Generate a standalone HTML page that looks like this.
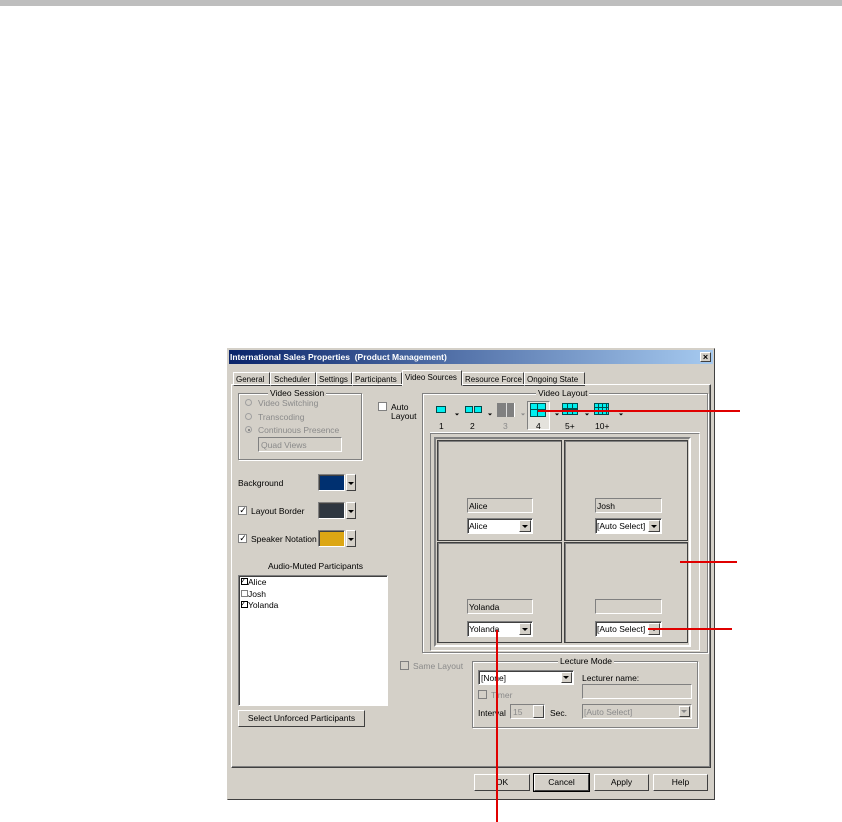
<!DOCTYPE html>
<html><head><meta charset="utf-8"><style>
body{margin:0;width:842px;height:822px;background:#fff;position:relative;overflow:hidden;font-family:"Liberation Sans",sans-serif;font-size:8.5px;color:#000}
div,span{position:absolute;box-sizing:border-box}
.t{white-space:nowrap;line-height:10px}
.g{color:#8a8a8a}
.dlg{background:#d4d0c8;border:1px solid #404040;border-top-color:#d4d0c8;border-left-color:#d4d0c8}
.raise{background:#d4d0c8;border:1px solid;border-color:#fff #404040 #404040 #fff}
.sunk{background:#fff;border:1px solid;border-color:#808080 #fff #fff #808080;box-shadow:inset 1px 1px 0 #404040}
.sunkg{background:#d4d0c8;border:1px solid;border-color:#808080 #fff #fff #808080}
.grp{border:1px solid #808080;box-shadow:1px 1px 0 #fff, inset 1px 1px 0 #fff}
.lbl{background:#d4d0c8;padding:0 2px}
.arr{width:0;height:0;border-left:3px solid transparent;border-right:3px solid transparent;border-top:3px solid #000}
.cb{width:9px;height:9px;background:#fff;border:1px solid #808080}
.btn{background:#d4d0c8;border:1px solid;border-color:#fff #404040 #404040 #fff;text-align:center;line-height:14px}
.cy{background:#00f0f0;border:1px solid #004848}
.red{background:#e00000}
.tab{font-size:8px}
</style></head><body>
<div style="left:0;top:0;width:842px;height:6px;background:#bebebe"></div>

<div class="dlg" style="left:227px;top:348px;width:488px;height:452px"></div>
<div style="left:229px;top:350px;width:484px;height:14px;background:linear-gradient(90deg,#0a246a,#a6caf0)"></div>
<div class="t" style="left:230px;top:352px;color:#fff;font-weight:bold;font-size:8.5px">International Sales Properties&nbsp; (Product Management)</div>
<div class="raise" style="left:700px;top:352px;width:11px;height:10px;font-size:9px;line-height:8px;text-align:center;font-weight:bold">×</div>

<!-- tabs -->
<div class="raise" style="left:233px;top:372px;width:37px;height:14px"></div><div class="t tab" style="left:236px;top:375px">General</div>
<div class="raise" style="left:270px;top:372px;width:46px;height:14px"></div><div class="t tab" style="left:274px;top:375px">Scheduler</div>
<div class="raise" style="left:316px;top:372px;width:36px;height:14px"></div><div class="t tab" style="left:319px;top:375px">Settings</div>
<div class="raise" style="left:352px;top:372px;width:50px;height:14px"></div><div class="t tab" style="left:355px;top:375px">Participants</div>
<div class="raise" style="left:462px;top:372px;width:62px;height:14px"></div><div class="t tab" style="left:465px;top:375px">Resource Force</div>
<div class="raise" style="left:524px;top:372px;width:61px;height:14px"></div><div class="t tab" style="left:527px;top:375px">Ongoing State</div>
<div style="left:231px;top:384px;width:480px;height:384px;border:1px solid;border-color:#fff #404040 #404040 #fff;box-shadow:inset -1px -1px 0 #808080"></div>
<div style="left:402px;top:370px;width:60px;height:16px;background:#d4d0c8;border:1px solid;border-color:#fff #404040 transparent #fff"></div><div class="t tab" style="left:405px;top:373px">Video Sources</div>

<!-- Video session -->
<div class="grp" style="left:238px;top:393px;width:124px;height:67px"></div>
<div class="t lbl" style="left:268px;top:388px">Video Session</div>
<div style="left:245px;top:399px;width:7px;height:7px;border:1px solid #a0a0a0;border-radius:50%;background:#d4d0c8"></div><div class="t g" style="left:258px;top:398px">Video Switching</div>
<div style="left:245px;top:413px;width:7px;height:7px;border:1px solid #a0a0a0;border-radius:50%"></div><div class="t g" style="left:258px;top:412px">Transcoding</div>
<div style="left:245px;top:426px;width:7px;height:7px;border:1px solid #a0a0a0;border-radius:50%"></div><div style="left:248px;top:429px;width:2px;height:2px;background:#888"></div><div class="t g" style="left:258px;top:425px">Continuous Presence</div>
<div class="sunkg" style="left:258px;top:437px;width:84px;height:15px"></div><div class="t g" style="left:261px;top:440px">Quad Views</div>

<!-- colors -->
<div class="t" style="left:238px;top:478px">Background</div>
<div class="sunk" style="left:318px;top:474px;width:27px;height:17px;background:#003070"></div>
<div class="raise" style="left:346px;top:474px;width:10px;height:17px"></div><div class="arr" style="left:348px;top:482px"></div>
<div class="cb" style="left:238px;top:506px"></div><div class="t" style="left:238px;top:505px;font-size:9px;width:10px;text-align:center">✓</div><div class="t" style="left:251px;top:506px">Layout Border</div>
<div class="sunk" style="left:318px;top:502px;width:27px;height:17px;background:#2e3640"></div>
<div class="raise" style="left:346px;top:502px;width:10px;height:17px"></div><div class="arr" style="left:348px;top:510px"></div>
<div class="cb" style="left:238px;top:534px"></div><div class="t" style="left:238px;top:533px;font-size:9px;width:10px;text-align:center">✓</div><div class="t" style="left:251px;top:534px">Speaker Notation</div>
<div class="sunk" style="left:318px;top:530px;width:27px;height:17px;background:#dca614"></div>
<div class="raise" style="left:346px;top:530px;width:10px;height:17px"></div><div class="arr" style="left:348px;top:538px"></div>

<div class="t" style="left:268px;top:561px">Audio-Muted Participants</div>
<div class="sunk" style="left:238px;top:575px;width:150px;height:131px"></div>
<div class="cb" style="left:241px;top:578px;width:7px;height:7px;border-color:#000"></div><div class="t" style="left:240px;top:576px;font-size:8px">✓</div><div class="t" style="left:248px;top:577px">Alice</div>
<div class="cb" style="left:241px;top:590px;width:7px;height:7px"></div><div class="t" style="left:248px;top:589px">Josh</div>
<div class="cb" style="left:241px;top:601px;width:7px;height:7px;border-color:#000"></div><div class="t" style="left:240px;top:599px;font-size:8px">✓</div><div class="t" style="left:248px;top:600px">Yolanda</div>
<div class="btn" style="left:238px;top:710px;width:127px;height:17px">Select Unforced Participants</div>

<!-- auto layout -->
<div class="cb" style="left:378px;top:402px"></div>
<div class="t" style="left:391px;top:402px">Auto</div><div class="t" style="left:391px;top:411px">Layout</div>

<!-- video layout -->
<div class="grp" style="left:422px;top:393px;width:286px;height:260px"></div>
<div class="t lbl" style="left:536px;top:388px">Video Layout</div>
<div class="cy" style="left:436px;top:406px;width:10px;height:7px"></div><div class="t" style="left:439px;top:421px">1</div><div class="arr" style="left:454px;top:413px;transform:scale(.7)"></div>
<div class="cy" style="left:465px;top:406px;width:8px;height:7px"></div><div class="cy" style="left:474px;top:406px;width:8px;height:7px"></div><div class="t" style="left:470px;top:421px">2</div><div class="arr" style="left:487px;top:413px;transform:scale(.7)"></div>
<div style="left:497px;top:403px;width:18px;height:14px;background:#808080;border-right:1px solid #fff"></div><div style="left:506px;top:403px;width:1px;height:14px;background:#ddd"></div><div class="t g" style="left:503px;top:421px">3</div><div class="arr" style="left:520px;top:413px;transform:scale(.7);border-top-color:#888"></div>
<div style="left:527px;top:401px;width:23px;height:29px;border:1px solid;border-color:#808080 #fff #fff #808080;background:#e4e2dc"></div>
<div class="cy" style="left:530px;top:403px;width:16px;height:14px;background:#00f0f0;border-color:#005050"></div><div style="left:537px;top:403px;width:1px;height:14px;background:#005050"></div><div style="left:530px;top:409px;width:16px;height:1px;background:#005050"></div>
<div class="t" style="left:536px;top:421px">4</div>
<div class="arr" style="left:554px;top:413px;transform:scale(.7)"></div>
<div style="left:562px;top:403px;width:16px;height:12px;background:repeating-linear-gradient(90deg,#00f0f0 0 4px,#005050 4px 5px),#00f0f0;border:1px solid #005050"></div><div style="left:562px;top:408px;width:16px;height:2px;background:#005050"></div>
<div class="t" style="left:565px;top:421px">5+</div><div class="arr" style="left:584px;top:413px;transform:scale(.7)"></div>
<div style="left:594px;top:403px;width:15px;height:12px;background:repeating-linear-gradient(90deg,#00f0f0 0 3px,#005050 3px 4px);border:1px solid #005050"></div><div style="left:594px;top:407px;width:15px;height:1px;background:#005050"></div><div style="left:594px;top:411px;width:15px;height:1px;background:#005050"></div>
<div class="t" style="left:595px;top:421px">10+</div><div class="arr" style="left:618px;top:413px;transform:scale(.7)"></div>
<div style="left:430px;top:432px;width:270px;height:1px;background:#fff"></div>
<div style="left:430px;top:433px;width:270px;height:218px;border:1px solid;border-color:#808080 #fff #fff #808080"></div>
<div style="left:434px;top:437px;width:257px;height:210px;border:2px solid #808080;border-right-color:#fff;border-bottom-color:#fff"></div>
<!-- cells -->
<div style="left:437px;top:440px;width:125px;height:101px;border:1px solid #404040;box-shadow:inset 1px 1px 0 #808080"></div>
<div style="left:564px;top:440px;width:124px;height:101px;border:1px solid #404040;box-shadow:inset 1px 1px 0 #808080"></div>
<div style="left:437px;top:542px;width:125px;height:101px;border:1px solid #404040;box-shadow:inset 1px 1px 0 #808080"></div>
<div style="left:564px;top:542px;width:124px;height:101px;border:1px solid #404040;box-shadow:inset 1px 1px 0 #808080"></div>

<div class="sunkg" style="left:467px;top:498px;width:66px;height:15px"></div><div class="t" style="left:469px;top:501px">Alice</div>
<div class="sunk" style="left:467px;top:518px;width:66px;height:16px"></div><div class="t" style="left:469px;top:521px">Alice</div><div class="raise" style="left:519px;top:520px;width:12px;height:12px"></div><div class="arr" style="left:522px;top:525px"></div>
<div class="sunkg" style="left:595px;top:498px;width:67px;height:15px"></div><div class="t" style="left:597px;top:501px">Josh</div>
<div class="sunk" style="left:595px;top:518px;width:67px;height:16px"></div><div class="t" style="left:597px;top:521px">[Auto Select]</div><div class="raise" style="left:648px;top:520px;width:12px;height:12px"></div><div class="arr" style="left:651px;top:525px"></div>
<div class="sunkg" style="left:467px;top:599px;width:66px;height:15px"></div><div class="t" style="left:469px;top:602px">Yolanda</div>
<div class="sunk" style="left:467px;top:621px;width:66px;height:16px"></div><div class="t" style="left:469px;top:624px">Yolanda</div><div class="raise" style="left:519px;top:623px;width:12px;height:12px"></div><div class="arr" style="left:522px;top:628px"></div>
<div class="sunkg" style="left:595px;top:599px;width:67px;height:15px"></div>
<div class="sunk" style="left:595px;top:621px;width:67px;height:16px"></div><div class="t" style="left:597px;top:624px">[Auto Select]</div><div class="raise" style="left:648px;top:623px;width:12px;height:12px"></div><div class="arr" style="left:651px;top:628px"></div>

<!-- same layout / lecture -->
<div class="cb" style="left:400px;top:661px;background:#d4d0c8"></div><div class="t g" style="left:413px;top:661px">Same Layout</div>
<div class="grp" style="left:472px;top:661px;width:226px;height:67px"></div>
<div class="t lbl" style="left:558px;top:656px">Lecture Mode</div>
<div class="sunk" style="left:478px;top:670px;width:96px;height:15px"></div><div class="t" style="left:481px;top:673px">[None]</div><div class="raise" style="left:561px;top:672px;width:11px;height:11px"></div><div class="arr" style="left:563px;top:676px"></div>
<div class="t" style="left:582px;top:673px">Lecturer name:</div>
<div class="sunkg" style="left:582px;top:684px;width:110px;height:15px"></div>
<div class="cb" style="left:478px;top:690px;background:#d4d0c8"></div><div class="t g" style="left:491px;top:690px">Timer</div>
<div class="t" style="left:478px;top:708px">Interval</div>
<div class="sunkg" style="left:510px;top:704px;width:35px;height:15px"></div><div class="t g" style="left:513px;top:707px">15</div><div class="raise" style="left:533px;top:705px;width:11px;height:13px"></div>
<div class="t" style="left:550px;top:708px">Sec.</div>
<div class="sunkg" style="left:582px;top:704px;width:110px;height:15px"></div><div class="t g" style="left:584px;top:707px">[Auto Select]</div><div class="raise" style="left:679px;top:706px;width:11px;height:11px"></div><div class="arr" style="left:681px;top:710px;border-top-color:#888"></div>

<!-- buttons -->
<div class="btn" style="left:474px;top:774px;width:56px;height:17px">OK</div>
<div class="btn" style="left:534px;top:774px;width:55px;height:17px;outline:1px solid #000">Cancel</div>
<div class="btn" style="left:594px;top:774px;width:55px;height:17px">Apply</div>
<div class="btn" style="left:653px;top:774px;width:55px;height:17px">Help</div>

<!-- red callouts -->
<div class="red" style="left:538px;top:410px;width:202px;height:2px"></div>
<div class="red" style="left:680px;top:561px;width:57px;height:2px"></div>
<div class="red" style="left:648px;top:628px;width:84px;height:2px"></div>
<div class="red" style="left:496px;top:630px;width:2px;height:192px"></div>
</body></html>
